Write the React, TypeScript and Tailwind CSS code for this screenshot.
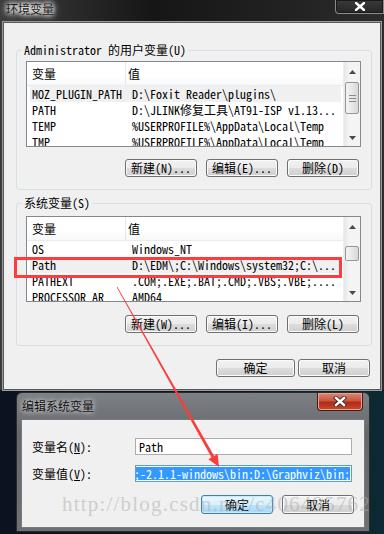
import React from "react";

const MONO = "font-['Noto_Sans_Mono_CJK_SC','Liberation_Mono','Noto_Sans_CJK_SC',monospace]";
const CJK = "font-['Noto_Sans_CJK_SC',sans-serif]";

type Row = [string, string];

function Btn({ children, wide, focused, tall }: { children: React.ReactNode; wide?: boolean; focused?: boolean; tall?: boolean }) {
  return (
    <div
      className={`${wide ? "w-[79px]" : "w-[72px]"} ${tall ? "h-[19px]" : "h-[18px]"} rounded-[3px] border ${
        focused
          ? "border-[#3c7fb1] bg-[linear-gradient(#eaf6fd,#d9f0fc_50%,#bee6fd_50%,#a7d9f5)] shadow-[inset_0_0_0_1px_#c8eafb]"
          : "border-[#707070] bg-[linear-gradient(#f2f2f2,#ebebeb_50%,#dddddd_50%,#cfcfcf)] shadow-[inset_0_0_0_1px_#fbfbfb]"
      } flex items-center justify-center text-[12px] leading-none text-black ${MONO}`}
    >
      {children}
    </div>
  );
}

function UpArrow() {
  return (
    <svg width="7" height="4" viewBox="0 0 7 4">
      <path d="M0 4 L3.5 0 L7 4 Z" fill="#4a4a4a" />
    </svg>
  );
}
function DownArrow() {
  return (
    <svg width="7" height="4" viewBox="0 0 7 4">
      <path d="M0 0 L3.5 4 L7 0 Z" fill="#4a4a4a" />
    </svg>
  );
}

function ListView({ rows, thumbTop, thumbH, grip, selected }: { rows: Row[]; thumbTop: string; thumbH: string; grip?: boolean; selected: number }) {
  return (
    <div className="w-[335px] h-[86px] border border-[#828790] bg-white flex overflow-hidden">
      <div className="flex-1 min-w-0 flex flex-col">
        <div className={`h-[24px] shrink-0 flex items-center border-b border-[#ebebeb] bg-[linear-gradient(#ffffff,#ffffff_60%,#f7f8fa)] text-[12px] ${CJK}`}>
          <div className="w-[99px] h-full flex items-center pl-[5px] border-r border-[#e3e6ea]">变量</div>
          <div className="pl-[2px]">值</div>
        </div>
        {rows.map((r, i) => (
          <div key={i} className={`h-[16px] shrink-0 flex text-[12px] leading-[16px] whitespace-nowrap ${MONO}`}>
            <div className={`flex h-full ml-[3px] mr-[2px] flex-1 ${i === selected ? "bg-[#f0f0f0]" : ""}`}>
              <div className="w-[96px] pl-[2px] overflow-hidden">{r[0]}</div>
              <div className="pl-[6px] overflow-hidden">{r[1]}</div>
            </div>
          </div>
        ))}
      </div>
      <div className="w-[17px] shrink-0 relative bg-[linear-gradient(90deg,#e6e6e6,#f4f4f4_30%,#f4f4f4)] border-l border-[#eeeeee]">
        <div className="absolute left-[5px] top-[8px]">
          <UpArrow />
        </div>
        <div
          className={`absolute left-[1px] right-[1px] ${thumbTop} ${thumbH} rounded-[2px] border border-[#979797] bg-[linear-gradient(90deg,#f3f3f3,#e8e8e8_50%,#d6d6d6)] flex flex-col items-center justify-center gap-[2px]`}
        >
          {grip && (
            <>
              <div className="w-[7px] h-px bg-[#8a8a8a]" />
              <div className="w-[7px] h-px bg-[#8a8a8a]" />
              <div className="w-[7px] h-px bg-[#8a8a8a]" />
            </>
          )}
        </div>
        <div className="absolute left-[5px] top-[74px]">
          <DownArrow />
        </div>
      </div>
    </div>
  );
}

function GroupBox({ label, children }: { label: React.ReactNode; children: React.ReactNode }) {
  return (
    <fieldset className="w-[356px] border border-[#d5dfe5] rounded-[3px] pl-[9px] pr-[10px] pb-[12px]">
      <legend className={`-ml-[4px] px-[2px] text-[12px] leading-[14px] ${MONO}`}>{label}</legend>
      {children}
    </fieldset>
  );
}

export default function App() {
  const list1: Row[] = [
    ["MOZ_PLUGIN_PATH", "D:\\Foxit Reader\\plugins\\"],
    ["PATH", "D:\\JLINK修复工具\\AT91-ISP v1.13..."],
    ["TEMP", "%USERPROFILE%\\AppData\\Local\\Temp"],
    ["TMP", "%USERPROFILE%\\AppData\\Local\\Temp"],
  ];
  const list2: Row[] = [
    ["OS", "Windows_NT"],
    ["Path", "D:\\EDM\\;C:\\Windows\\system32;C:\\..."],
    ["PATHEXT", ".COM;.EXE;.BAT;.CMD;.VBS;.VBE;...."],
    ["PROCESSOR_AR", "AMD64"],
  ];

  return (
    <div className="relative w-[384px] h-[534px] overflow-hidden bg-[linear-gradient(90deg,#0b1320,#0d1826_50%,#0c2a33)] text-black">
      {/* Outer window */}
      <div className="w-[384px] h-[391px] flex flex-col bg-[linear-gradient(90deg,#3c3c3c,#161616_40%,#202020_70%,#2c2c2c)] border-b border-[#111]">
        <div className="h-[22px] shrink-0 flex items-start justify-between">
          <div
            className={`ml-[4px] mt-[2px] px-[2px] text-[12px] leading-[14px] text-[#1a1a1a] ${CJK} [text-shadow:0_0_4px_#ffffff,0_0_6px_#ffffff,0_0_8px_#dddddd] bg-[radial-gradient(ellipse_at_center,#9a9a9a,transparent_75%)]`}
          >
            环境变量
          </div>
          <div className="w-[49px] h-[14px] mr-0 rounded-bl-[4px] border border-t-0 border-[#8c8c8c] shadow-[inset_0_0_0_1px_#1a1a1a] bg-[linear-gradient(#3a3a3a,#262626)] flex items-center justify-center">
            <svg width="10" height="9" viewBox="0 0 10 9">
              <path d="M1 1 L9 8 M9 1 L1 8" stroke="#ffffff" strokeWidth="2.4" strokeLinecap="square" />
            </svg>
          </div>
        </div>
        <div className="mx-[3px] flex-1 bg-[#f0f0f0] border border-[#5a5a5a] shadow-[0_0_0_1px_#9a9a9a] flex flex-col pl-[12px] pt-[20px]">
          <GroupBox
            label={
              <span>
                Administrator <span className={CJK}>的用户变量</span>(U)
              </span>
            }
          >
            <div className="pt-[4px]">
              <ListView rows={list1} thumbTop="top-[20px]" thumbH="h-[32px]" grip selected={0} />
            </div>
            <div className="flex justify-end gap-[9px] pr-[2px] mt-[12px]">
              <Btn>新建(N)...</Btn>
              <Btn>编辑(E)...</Btn>
              <Btn>删除(D)</Btn>
            </div>
          </GroupBox>
          <div className="h-[6px]" />
          <GroupBox label={<span><span className={CJK}>系统变量</span>(S)</span>}>
            <div className="pt-[6px]">
              <ListView rows={list2} thumbTop="top-[29px]" thumbH="h-[15px]" selected={1} />
            </div>
            <div className="flex justify-end gap-[9px] pr-[2px] mt-[13px]">
              <Btn>新建(W)...</Btn>
              <Btn>编辑(I)...</Btn>
              <Btn>删除(L)</Btn>
            </div>
          </GroupBox>
          <div className="flex justify-end gap-[3px] pr-[10px] mt-[13px]">
            <Btn wide>确定</Btn>
            <Btn>取消</Btn>
          </div>
        </div>
      </div>

      {/* Red highlight rectangle */}
      <div className="absolute left-[14px] top-[257px] w-[328px] h-[21px] border-[3px] border-[#ff3b3b]" />

      {/* Edit dialog */}
      <div className="absolute left-[16px] top-[392px] w-[354px] h-[140px] rounded-t-[6px] border border-[#2b2b2b] bg-[linear-gradient(#7d8185,#64686c_30%,#6e7174)] flex flex-col">
        <div className="h-[26px] shrink-0 flex items-start justify-between">
          <div className={`ml-[5px] mt-[6px] text-[12px] leading-[14px] text-[#111] ${CJK} [text-shadow:0_0_4px_#d8d8d8,0_0_6px_#cfcfcf]`}>
            编辑系统变量
          </div>
          <div className="w-[46px] h-[18px] mr-[6px] rounded-b-[4px] border border-t-0 border-[#4a1a12] bg-[linear-gradient(#d98a78,#c8563e_45%,#b52a14_55%,#c64a2e)] shadow-[inset_0_0_0_1px_#e9a090] flex items-center justify-center">
            <svg width="14" height="11" viewBox="0 0 14 11">
              <path d="M3 2 L11 9 M11 2 L3 9" stroke="#3a2a28" strokeWidth="4.2" strokeLinecap="square" />
              <path d="M3 2 L11 9 M11 2 L3 9" stroke="#ffffff" strokeWidth="2.4" strokeLinecap="square" />
            </svg>
          </div>
        </div>
        <div className="mx-[4px] h-[109px] bg-[#f0f0f0] border border-[#7a7a7a] flex flex-col pl-[10px] pt-[18px]">
          <div className="grid grid-cols-[103px_217px] gap-y-[10px] items-center">
            <div className={`text-[12px] leading-none ${MONO}`}>
              变量名(<span className="underline">N</span>):
            </div>
            <div className={`h-[17px] border border-[#abadb3] bg-white flex items-center pl-[3px] text-[12px] leading-none ${MONO}`}>Path</div>
            <div className={`text-[12px] leading-none ${MONO}`}>
              变量值(<span className="underline">V</span>):
            </div>
            <div className={`h-[17px] border border-[#569de5] bg-white flex items-center justify-end overflow-hidden pr-[1px] text-[12px] leading-none ${MONO}`}>
              <span className="bg-[#3399ff] text-white whitespace-nowrap h-[13px] flex items-center">;-2.1.1-windows\bin;D:\Graphviz\bin;</span>
            </div>
          </div>
          <div className="flex justify-end gap-[9px] pr-[10px] mt-[13px]">
            <Btn focused tall>确定</Btn>
            <Btn tall>取消</Btn>
          </div>
        </div>
      </div>

      {/* Watermark */}
      <div className="absolute left-[62px] top-[494px] text-[21px] leading-none tracking-[1.2px] text-[rgba(170,170,170,0.5)] font-['Liberation_Serif',serif] whitespace-nowrap">
        http://blog.csdn.net/c406495762
      </div>

      {/* Arrow */}
      <svg className="absolute left-0 top-0 pointer-events-none" width="384" height="534" viewBox="0 0 384 534">
        <polygon points="116.7,287.2 117.3,286.8 214.3,456.3 211.7,457.7" fill="#ff3a3a" />
        <polygon points="219,467 208.4,459.2 217.6,454" fill="#ff3a3a" />
      </svg>
    </div>
  );
}
